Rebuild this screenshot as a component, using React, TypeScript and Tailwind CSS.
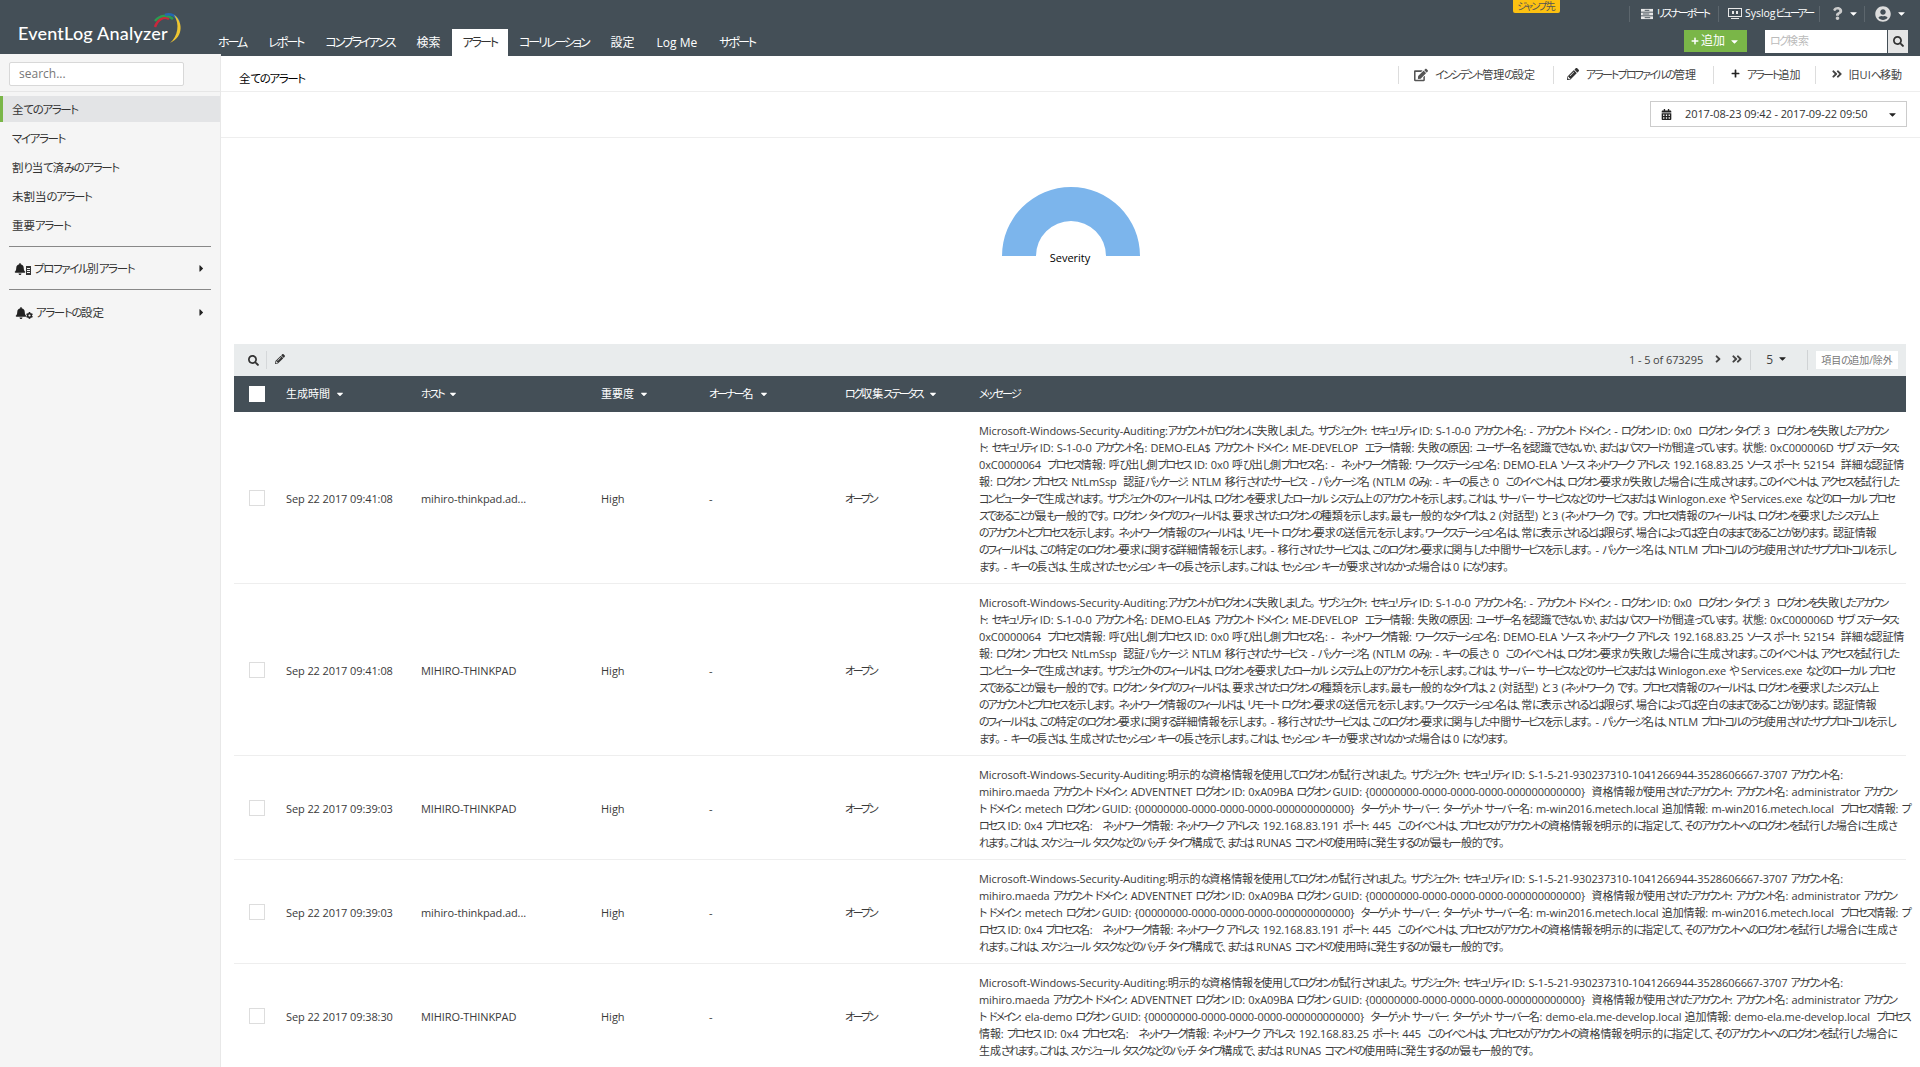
import { FaAngleDoubleRight, FaAngleRight, FaBell, FaCalendarAlt, FaCaretDown, FaCaretRight, FaCog, FaEdit, FaPencilAlt, FaPlus, FaQuestion, FaSearch, FaUserCircle } from "react-icons/fa";

const NAV = ["ホーム", "レポート", "コンプライアンス", "検索", "アラート", "コーリレーション", "設定", "Log Me", "サポート"];
const SIDE = ["全てのアラート", "マイ アラート", "割り当て済みのアラート", "未割当のアラート", "重要アラート"];
const COLS = ["生成時間", "ホスト", "重要度", "オーナー名", "ログ収集ステータス"];

const GUID = "{00000000-0000-0000-0000-000000000000}";

const FAILED = [
  "Microsoft-Windows-Security-Auditing:アカウントがログオンに失敗しました。 サブジェクト: セキュリティ ID: S-1-0-0 アカウント名: - アカウント ドメイン: - ログオン ID: 0x0  ログオン タイプ: 3  ログオンを失敗したアカウン",
  "ト: セキュリティ ID: S-1-0-0 アカウント名: DEMO-ELA$ アカウント ドメイン: ME-DEVELOP  エラー情報: 失敗の原因: ユーザー名を認識できないか、またはパスワードが間違っています。 状態: 0xC000006D サブ ステータス:",
  "0xC0000064  プロセス情報: 呼び出し側プロセス ID: 0x0 呼び出し側プロセス名: -  ネットワーク情報: ワークステーション名: DEMO-ELA ソース ネットワーク アドレス: 192.168.83.25 ソース ポート: 52154  詳細な認証情",
  "報: ログオン プロセス: NtLmSsp  認証パッケージ: NTLM 移行されたサービス: - パッケージ名 (NTLM のみ): - キーの長さ: 0  このイベントは、ログオン要求が失敗した場合に生成されます。このイベントは、アクセスを試行した",
  "コンピューターで生成されます。 サブジェクトのフィールドは、ログオンを要求したローカル システム上のアカウントを示します。これは、サーバー サービスなどのサービスまたは Winlogon.exe や Services.exe などのローカル プロセ",
  "スであることが最も一般的です。 ログオン タイプのフィールドは、要求されたログオンの種類を示します。最も一般的なタイプは、2 (対話型) と 3 (ネットワーク) です。 プロセス情報のフィールドは、ログオンを要求したシステム上",
  "のアカウントとプロセスを示します。 ネットワーク情報のフィールドは、リモート ログオン要求の送信元を示します。ワークステーション名は、常に表示されるとは限らず、場合によっては空白のままであることがあります。 認証情報",
  "のフィールドは、この特定のログオン要求に関する詳細情報を示します。 - 移行されたサービスは、このログオン要求に関与した中間サービスを示します。 - パッケージ名は、NTLM プロトコルのうち使用されたサブプロトコルを示し",
  "ます。 - キーの長さは、生成されたセッション キーの長さを示します。これは、セッション キーが要求されなかった場合は 0 になります。",
];

const EXPLICIT_HEAD = "Microsoft-Windows-Security-Auditing:明示的な資格情報を使用してログオンが試行されました。 サブジェクト: セキュリティ ID: S-1-5-21-930237310-1041266944-3528606667-3707 アカウント名:";
const EXPLICIT_USER = `mihiro.maeda アカウント ドメイン: ADVENTNET ログオン ID: 0xA09BA ログオン GUID: ${GUID}  資格情報が使用されたアカウント: アカウント名: administrator アカウン`;

const METECH = [
  EXPLICIT_HEAD,
  EXPLICIT_USER,
  `ト ドメイン: metech ログオン GUID: ${GUID}  ターゲット サーバー: ターゲット サーバー名: m-win2016.metech.local 追加情報: m-win2016.metech.local  プロセス情報: プ`,
  "ロセス ID: 0x4 プロセス名:   ネットワーク情報: ネットワーク アドレス: 192.168.83.191 ポート: 445  このイベントは、プロセスがアカウントの資格情報を明示的に指定して、そのアカウントへのログオンを試行した場合に生成さ",
  "れます。これは、スケジュール タスクなどのバッチ タイプ構成で、または RUNAS コマンドの使用時に発生するのが最も一般的です。",
];

const ELA = [
  EXPLICIT_HEAD,
  EXPLICIT_USER,
  `ト ドメイン: ela-demo ログオン GUID: ${GUID}  ターゲット サーバー: ターゲット サーバー名: demo-ela.me-develop.local 追加情報: demo-ela.me-develop.local  プロセス`,
  "情報: プロセス ID: 0x4 プロセス名:   ネットワーク情報: ネットワーク アドレス: 192.168.83.25 ポート: 445  このイベントは、プロセスがアカウントの資格情報を明示的に指定して、そのアカウントへのログオンを試行した場合に",
  "生成されます。これは、スケジュール タスクなどのバッチ タイプ構成で、または RUNAS コマンドの使用時に発生するのが最も一般的です。",
];

const ROWS = [
  { time: "Sep 22 2017 09:41:08", host: "mihiro-thinkpad.ad...", lines: FAILED },
  { time: "Sep 22 2017 09:41:08", host: "MIHIRO-THINKPAD", lines: FAILED },
  { time: "Sep 22 2017 09:39:03", host: "MIHIRO-THINKPAD", lines: METECH },
  { time: "Sep 22 2017 09:39:03", host: "mihiro-thinkpad.ad...", lines: METECH },
  { time: "Sep 22 2017 09:38:30", host: "MIHIRO-THINKPAD", lines: ELA },
];

const GRID = "grid grid-cols-[52px_135px_180px_108px_136px_134px_1fr]";

// the original font has much narrower kana than Noto, so kana runs get tightened
function J({ t, kana = "tracking-[-0.17em]" }: { t: string; kana?: string }) {
  const parts = t.split(/([\u3040-\u30ff]+)/);
  return (
    <>
      {parts.map((p, i) =>
        i % 2 ? (
          <span key={i} className={kana}>{p}</span>
        ) : (
          p
        )
      )}
    </>
  );
}

function Logo() {
  return (
    <div className="relative h-14 w-[207px] shrink-0">
      <span className="absolute left-[18px] top-[23px] font-['Lato',sans-serif] text-[18px] leading-5 font-medium tracking-[0.2px] text-white">EventLog Analyzer</span>
      <svg className="absolute left-[152px] top-[12px]" width="36" height="34" viewBox="0 0 36 34" fill="none">
        <path d="M3 15 C6 7 12 4 17 7" stroke="#c8283c" strokeWidth="2.5" />
        <path d="M3 9 C8 3 15 2 21 7" stroke="#2e9a50" strokeWidth="2.5" />
        <path d="M13 3 C18 1 24 3 27 10" stroke="#2667b0" strokeWidth="2.5" />
        <path d="M22 3 C30 8 33 24 18 31 C26 24 28 12 22 3 Z" fill="#eec531" />
      </svg>
    </div>
  );
}

function ListenerIcon() {
  return (
    <svg width="12" height="12" viewBox="0 0 13 13" className="mr-[4px]">
      <rect x="0" y="1" width="13" height="3" fill="#e8e8e8" />
      <rect x="0" y="5" width="13" height="3" fill="#e8e8e8" />
      <rect x="0" y="9" width="13" height="3" fill="#e8e8e8" />
      <rect x="4" y="2" width="5" height="1" fill="#444f57" />
      <rect x="2" y="6" width="7" height="1" fill="#444f57" />
      <rect x="4" y="10" width="6" height="1" fill="#444f57" />
    </svg>
  );
}

function MonitorIcon() {
  return (
    <svg width="14" height="13" viewBox="0 0 14 13" className="mr-[3px]" fill="none">
      <rect x="0.5" y="1.5" width="13" height="8" stroke="#e8e8e8" />
      <rect x="4" y="4" width="2" height="3" fill="#e8e8e8" />
      <rect x="8" y="4" width="2" height="3" fill="#e8e8e8" />
      <rect x="3" y="11" width="8" height="1" fill="#e8e8e8" />
    </svg>
  );
}

function Header() {
  const kana = "tracking-[-0.2em]";
  return (
    <header className="relative flex h-14 bg-[#444f57]">
      <Logo />
      <nav className="flex h-14 items-end text-[12px] whitespace-nowrap text-white">
        {NAV.map((n) => (
          <div key={n} className={`flex h-[27px] items-center px-[11px] ${n === "アラート" ? "bg-white text-[#333]" : ""}`}>
            <J t={n} />
          </div>
        ))}
      </nav>
      <div className="absolute top-0 left-[1513px] flex h-[13px] w-[47px] items-center justify-center rounded-b-[2px] bg-[#fdc111] text-[10px] whitespace-nowrap text-[#555]">
        <J t="ジャンプ先" />
      </div>
      <div className="ml-auto flex flex-col items-end pr-[12px]">
        <div className="mr-px flex h-[27px] items-center text-[10.5px] whitespace-nowrap text-white">
          <div className="flex h-4 items-center border-l border-[#5c666d] pl-[11px] pr-[9px]"><ListenerIcon /><J t="リスナーポート" kana={kana} /></div>
          <div className="flex h-4 items-center border-l border-[#5c666d] pl-[9px] pr-[6px]"><MonitorIcon /><J t="Syslogビューアー" kana={kana} /></div>
          <div className="flex h-4 items-center border-l border-[#5c666d] pl-[11px] pr-[5px] text-[#ccc]"><FaQuestion size={13} /><FaCaretDown size={11} className="ml-[4px] text-white" /></div>
          <div className="flex h-4 items-center border-l border-[#5c666d] pl-[10px] text-[#ddd]"><FaUserCircle size={16} /><FaCaretDown size={11} className="ml-[5px] text-white" /></div>
        </div>
        <div className="mt-[3px] flex">
          <div className="mr-[18px] flex h-[22px] w-[63px] items-center justify-center bg-[#7ab648] text-[12px] text-white">
            <FaPlus size={8} className="mr-[2px]" />追加<FaCaretDown size={11} className="ml-[4px]" />
          </div>
          <div className="flex h-[23px] w-[122px] items-center bg-white pl-[5px] text-[11px] text-[#bbb]"><J t="ログ検索" /></div>
          <div className="ml-px flex h-[23px] w-[20px] items-center justify-center bg-[#e5e5e5] text-[#333]"><FaSearch size={11} /></div>
        </div>
      </div>
    </header>
  );
}

function Sidebar() {
  const kana = "tracking-[-0.12em]";
  return (
    <aside className="relative -mt-[2px] h-[1013px] w-[221px] shrink-0 border-r border-[#e8e8e8] bg-[#f5f5f5] text-[11.5px] text-[#333] [word-spacing:2px]">
      <div className="h-[38px] border-b border-[#e6e6e6] pl-[9px] pt-[8px]">
        <div className="flex h-[24px] w-[175px] items-center rounded-[2px] border border-[#d8d8d8] bg-white pl-[9px] text-[12px] text-[#777]">search...</div>
      </div>
      <div className="mt-[4px]">
        {SIDE.map((s, i) => (
          <div key={s} className={`flex h-[26px] items-center pt-px whitespace-pre ${i === 0 ? "border-l-[3px] border-[#7ab648] bg-[#e3e4e6] pl-[9px]" : "pl-[12px]"} ${i > 0 ? "mt-[3px]" : ""}`}>
            <J t={s} kana={kana} />
          </div>
        ))}
      </div>
      <div className="mx-[9px] mt-[8px] border-t border-[#888]" />
      <div className="flex h-[42px] items-center pt-[2px] pl-[14px] pr-[13px]">
        <FaBell size={12} className="text-[#222]" />
        <svg width="5" height="9" viewBox="0 0 5 9" className="mt-[2px] mr-[3px]"><path d="M0 0h5v9H0z M1 2h3v1H1z M1 4h3v1H1z M1 6h3v1H1z" fill="#333" fillRule="evenodd" /></svg>
        <J t="プロファイル別アラート" kana={kana} />
        <FaCaretRight size={11} className="ml-auto -mt-[2px] text-[#222]" />
      </div>
      <div className="mx-[9px] border-t border-[#888]" />
      <div className="flex h-[44px] items-center pt-[2px] pl-[15px] pr-[13px]">
        <FaBell size={12} className="text-[#222]" />
        <FaCog size={7} className="mt-[4px] mr-[3px] -ml-px text-[#222]" />
        <J t="アラートの設定" kana={kana} />
        <FaCaretRight size={11} className="ml-auto -mt-[2px] text-[#222]" />
      </div>
    </aside>
  );
}

function TitleBar() {
  const sep = "flex h-[18px] items-center border-l border-[#ddd]";
  return (
    <div className="flex h-9 items-center border-b border-[#eee] pl-[18px] pr-[18px] text-[11px] whitespace-nowrap text-[#444]">
      <span className="mt-[10px] text-[11.5px] text-black"><J t="全てのアラート" kana="tracking-[-0.12em]" /></span>
      <div className="ml-auto mt-[3px] flex items-center">
        <div className={`${sep} pl-[15px] pr-[18px]`}><FaEdit size={14} className="mr-[7px] text-[#555]" /><J t="インシデント管理の設定" /></div>
        <div className={`${sep} pl-[13px] pr-[17px]`}><FaPencilAlt size={12} className="mr-[7px] -mt-[3px] text-[#333]" /><J t="アラートプロファイルの管理" /></div>
        <div className={`${sep} pl-[17px] pr-[14px]`}><FaPlus size={9} className="mr-[7px] -mt-[3px] text-[#222]" /><J t="アラート追加" /></div>
        <div className={`${sep} pl-[15px]`}><FaAngleDoubleRight size={12} className="mr-[6px] -mt-[3px] text-[#444]" /><J t="旧UIへ移動" /></div>
      </div>
    </div>
  );
}

function DateRow() {
  return (
    <div className="flex h-[46px] justify-end border-b border-[#eee] pr-[13px] pt-[9px]">
      <div className="flex h-[26px] w-[257px] items-center border border-[#ccc] pl-[10px] pr-[8px] text-[11px] text-[#333]">
        <FaCalendarAlt size={11} className="mr-[13px] text-[#222]" />
        <span className="tracking-[-0.1px]">2017-08-23 09:42 - 2017-09-22 09:50</span>
        <FaCaretDown size={11} className="ml-auto text-[#222]" />
      </div>
    </div>
  );
}

function Chart() {
  return (
    <div className="relative flex h-[206px] justify-center">
      <svg className="mt-[49px]" width="138" height="69" viewBox="0 0 138 69">
        <path d="M0 69A69 69 0 0 1 138 69H104A35 35 0 0 0 34 69Z" fill="#7cb5ec" />
      </svg>
      <span className="absolute left-[849px] top-[112px] -translate-x-1/2 text-[11px] leading-4 text-black">Severity</span>
    </div>
  );
}

function Toolbar() {
  return (
    <div className="flex h-8 items-center bg-[#e9eced] pr-[8px] text-[#444]">
      <FaSearch size={11} className="ml-[14px] text-[#333]" />
      <div className="ml-[7px] mr-[8px] h-[18px] border-l border-[#d5d8da]" />
      <FaPencilAlt size={10} className="-mt-[3px] text-[#333]" />
      <span className="ml-auto text-[11px] tracking-[-0.1px]">1 - 5 of 673295</span>
      <FaAngleRight size={12} className="ml-[9px] -mt-[3px]" />
      <FaAngleDoubleRight size={12} className="ml-[7px] -mt-[3px]" />
      <div className="ml-[7px] h-[20px] border-l border-[#d0d3d5]" />
      <span className="ml-[15px] text-[12px]">5</span>
      <FaCaretDown size={11} className="ml-[4px] -mt-[3px] text-[#222]" />
      <div className="ml-[19px] h-[20px] border-l border-[#d0d3d5]" />
      <div className="ml-[8px] flex h-[18px] w-[82px] items-center justify-center bg-white text-[10px] text-[#777]"><J t="項目の追加/除外" /></div>
    </div>
  );
}

function AlertTable() {
  return (
    <div className="ml-[13px] w-[1672px]">
      <Toolbar />
      <div className={`${GRID} h-9 items-center bg-[#444f57] text-[11px] text-white`}>
        <div className="ml-[15px] h-4 w-4 bg-white" />
        {COLS.map((c) => (
          <div key={c} className="flex items-center"><J t={c} kana="tracking-[-0.2em]" /><FaCaretDown size={10} className="ml-[5px]" /></div>
        ))}
        <div><J t="メッセージ" /></div>
      </div>
      {ROWS.map((r, i) => (
        <div key={i} className={`${GRID} items-center border-b border-[#eee] pt-[10px] pb-[8px] text-[11px] text-[#3a3a3a]`}>
          <div className="ml-[15px] -mt-[2px] h-4 w-4 border border-[#ddd] bg-white" />
          <div className="pt-px tracking-[-0.1px]">{r.time}</div>
          <div className="pt-px tracking-[-0.1px]">{r.host}</div>
          <div className="pt-px">High</div>
          <div className="pt-px">-</div>
          <div className="pt-px"><J t="オープン" kana="tracking-[-0.2em]" /></div>
          <div className="leading-[17px] tracking-[-0.1px] [word-spacing:0.5px]">
            {r.lines.map((l, j) => (
              <div key={j} className="whitespace-pre"><J t={l} kana="tracking-[-0.18em]" /></div>
            ))}
          </div>
        </div>
      ))}
    </div>
  );
}

export default function App() {
  return (
    <div className="h-[1067px] overflow-hidden bg-white font-['Open_Sans','Noto_Sans_CJK_JP',sans-serif] [font-feature-settings:'palt']">
      <Header />
      <div className="flex">
        <Sidebar />
        <main className="min-w-0 flex-1">
          <TitleBar />
          <DateRow />
          <Chart />
          <AlertTable />
        </main>
      </div>
    </div>
  );
}
